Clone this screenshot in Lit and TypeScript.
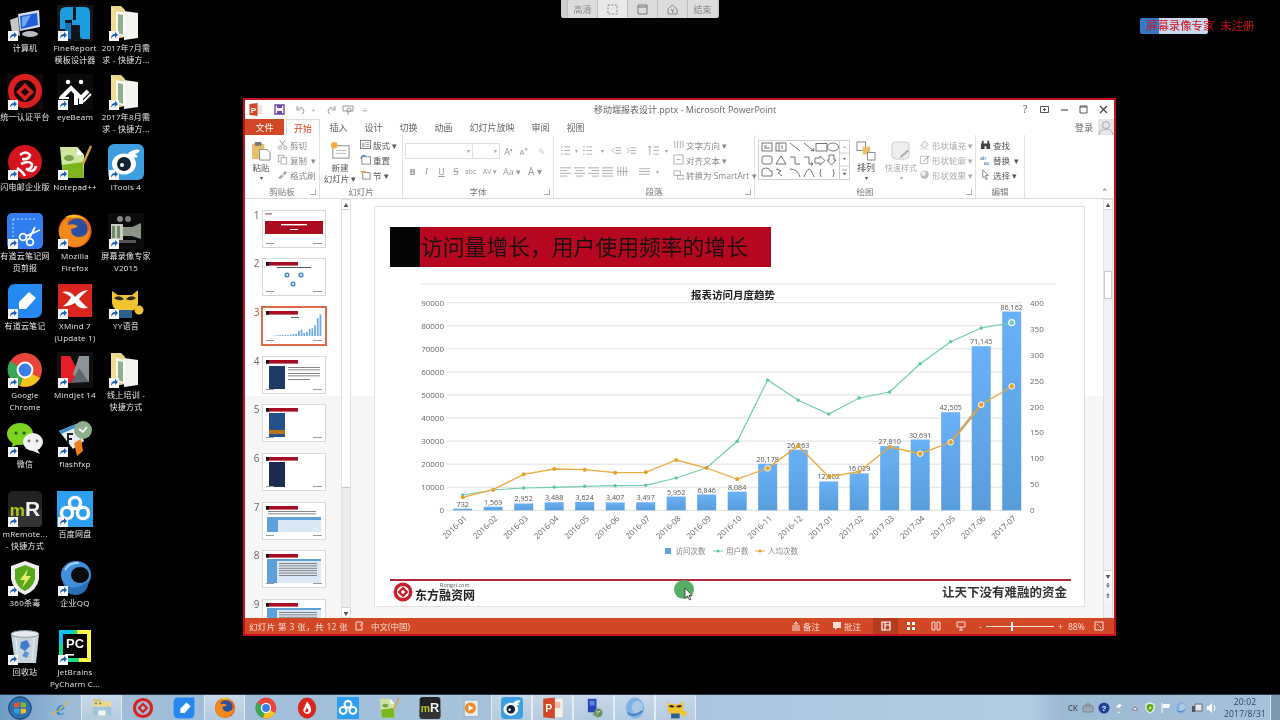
import { LitElement, html, css, svg } from 'lit';
import { customElement } from 'lit/decorators.js';

// desktop and taskbar icons, all on a 36x36 box
const shapes: Record<string, unknown> = {
  computer: svg`<path d="M11 9l21-4 1 17-20 4z" fill="#d5dce6"/><path d="M13 11l17-3 1 12-17 4z" fill="#1c5ed6"/><path d="M15 12l9-2-6 11-3 1z" fill="#6fa4ee"/><path d="M3 15l8-3 2 19-8-3z" fill="#c4c8cd"/><ellipse cx="23" cy="29" rx="8" ry="3" fill="#b9bec4"/>`,
  finereport: svg`<rect width="36" height="36" fill="#10161c"/><path d="M3 8q0-6 6-6h7v13H8v9H3z" fill="#1d9ce0"/><path d="M19 2h9q5 0 5 6v26h-7q-3 0-3-3V20h-8v-5h4z" fill="#1d9ce0"/><path d="M8 18h6v16H8z" fill="#1574b8"/>`,
  folder: svg`<path d="M3 1h10l4 4v27l-14 3z" fill="#e9d58c"/><path d="M16 6l14 2v25l-14 2z" fill="#f4f4f0"/><path d="M8 6l9 2v24l-9-3z" fill="#fff"/><path d="M10 9l5 1v20l-5-2z" fill="#8fae8a"/><path d="M3 1l5 3v30l-5 1z" fill="#f1dc92"/>`,
  diamond: svg`<rect width="36" height="36" fill="#140808"/><circle cx="18" cy="17" r="14" fill="none" stroke="#d9201f" stroke-width="6"/><path d="M18 9l9 9-9 9-9-9zM18 14l-4 4 4 4 4-4z" fill="#d9201f" fill-rule="evenodd"/>`,
  diamond2: svg`<circle cx="18" cy="18" r="14" fill="none" stroke="#d9201f" stroke-width="5"/><path d="M18 9l9 9-9 9-9-9zM18 14l-4 4 4 4 4-4z" fill="#d9201f" fill-rule="evenodd"/>`,
  eyebeam: svg`<rect width="36" height="36" fill="#0a0a0a"/><circle cx="11" cy="8" r="2.2" fill="#fff"/><circle cx="24" cy="8" r="2.2" fill="#fff"/><path d="M4 24L14 14l5 5v12M18 18l6 6 7-7M24 24v6" fill="none" stroke="#fff" stroke-width="4"/><path d="M2 24h10M26 28l8-8" stroke="#fff" stroke-width="2"/>`,
  mail: svg`<circle cx="18" cy="18" r="17" fill="#d3141d"/><path d="M13 11q6-5 10 0-1 5-8 4M14 20q8-4 11 0 0 6-6 5 8 5 10-3M10 24q6 4 8 8" fill="none" stroke="#fff" stroke-width="2.6"/>`,
  notepad: svg`<path d="M3 3h17l7 8v23H6z" fill="#cfe6a0"/><path d="M5 21l21-3 1 16H6z" fill="#7db61c"/><path d="M20 3l7 8h-7z" fill="#fff"/><ellipse cx="12" cy="14" rx="5" ry="3" fill="#78a04a"/><path d="M26 20l8-18" stroke="#d8a33a" stroke-width="2.4"/>`,
  itools: svg`<rect width="36" height="36" rx="6" fill="#3d9ee0"/><ellipse cx="16" cy="20" rx="12" ry="10.5" fill="#fff"/><circle cx="16" cy="20" r="7" fill="#123"/><circle cx="14" cy="21" r="2" fill="#fff"/><path d="M20 9q6-5 12-3-2 4-5 4 2 1 3 3-5 2-8-1z" fill="#fff"/>`,
  scissors: svg`<rect width="36" height="36" rx="5" fill="#2f7df0"/><path d="M6 6h22M6 6v20" stroke="#cfe0ff" stroke-dasharray="2 2" fill="none"/><circle cx="16" cy="24" r="3.4" fill="none" stroke="#fff" stroke-width="1.8"/><circle cx="23" cy="29" r="3.4" fill="none" stroke="#fff" stroke-width="1.8"/><path d="M19 23L33 17M22 26L28 14" stroke="#fff" stroke-width="1.8"/>`,
  firefox: svg`<circle cx="18" cy="18" r="16.5" fill="#e8601c"/><circle cx="20" cy="16" r="10.5" fill="#2a4f9c"/><path d="M2 18q2-12 12-15-5 5-3 9 5-2 10 1-3 3-7 3 0 8 8 8 7 0 11-8-1 16-15 18Q3 33 2 18z" fill="#f08a1d"/><path d="M8 4q12-6 22 4-8-5-13-3z" fill="#f4c020"/>`,
  recorder: svg`<rect width="36" height="36" fill="#0c0c0c"/><rect x="3" y="11" width="12" height="16" fill="#c8ccc4"/><path d="M4 13h3v12H4zM9 13h3v12H9z" fill="#6e8d60"/><path d="M15 14h9l9-4v16l-9-3h-9z" fill="#8c9486"/><circle cx="12" cy="6" r="3" fill="#888"/><circle cx="20" cy="6" r="3" fill="#777"/><path d="M8 27h20v3H8z" fill="#555"/>`,
  youdao: svg`<path d="M8 1h27v26q0 8-8 8H9q-8 0-8-8V9q0-8 7-8z" fill="#2689f2"/><path d="M22 9l7 6-10 11H12v-7z" fill="#fff"/>`,
  xmind: svg`<rect width="34" height="33" x="1" y="1" fill="#d9261c"/><path d="M5 9q8-2 13 5 5-6 13-7-7 6-9 9 4 5 9 9-9 2-13-5-6 4-12 3 6-4 8-9-4-3-9-5z" fill="#fff"/>`,
  yy: svg`<path d="M4 8l6 4h14l6-5v14q-2 8-13 8-12 0-13-9z" fill="#f1c232"/><path d="M6 15q5-4 10 1-5 3-10-1zM18 16q5-5 10-1-5 4-10 1z" fill="#2a2a2a"/><path d="M10 27h14v8H10z" fill="#2f5f8f"/><circle cx="31" cy="27" r="4.5" fill="#f1c232"/>`,
  chrome: svg`<circle cx="18" cy="18" r="17" fill="#e8453a"/><path d="M18 18L33 26A17 17 0 0 1 13 34z" fill="#f6c51c"/><path d="M18 18L13 34A17 17 0 0 1 3 9z" fill="#3aa757"/><circle cx="18" cy="18" r="8.4" fill="#fff"/><circle cx="18" cy="18" r="6.4" fill="#3b7de6"/>`,
  mindjet: svg`<rect width="36" height="36" fill="#101010"/><path d="M4 4h9l8 15-7 12H4z" fill="#e31e26"/><path d="M22 4h10v26H21l-5-8z" fill="#8b9498"/><path d="M14 31l8-15 10 14z" fill="#5e686c"/>`,
  wechat: svg`<ellipse cx="13" cy="13" rx="13" ry="11" fill="#7ed321"/><path d="M6 20l-1 6 7-3z" fill="#7ed321"/><circle cx="9" cy="12" r="1.6" fill="#2b5e10"/><circle cx="17" cy="12" r="1.6" fill="#2b5e10"/><ellipse cx="26" cy="21" rx="10" ry="9" fill="#f2f2f2"/><path d="M30 28l3 5-7-3z" fill="#f2f2f2"/><circle cx="22" cy="20" r="1.4" fill="#777"/><circle cx="30" cy="20" r="1.4" fill="#777"/>`,
  flashfxp: svg`<path d="M2 10l17-7 8 17-11 8z" fill="#e9eef2"/><path d="M2 10l17-7 1 3-16 7z" fill="#3a8fd0"/><circle cx="26" cy="9" r="9" fill="#8fae8e"/><path d="M22 8l4 3 4-5" stroke="#fff" fill="none" stroke-width="1.6"/><path d="M17 22l7-4 2 12-6 5z" fill="#ef7d1a"/><path d="M10 12h6v2h-4v3h3v2h-3v4h-2z" fill="#222"/>`,
  mremote: svg`<rect width="34" height="36" x="1" rx="5" fill="#222"/><rect x="1" y="18" width="34" height="18" rx="4" fill="#333"/><text x="18" y="25" font-size="17" font-weight="700" font-family="Liberation Sans" text-anchor="middle"><tspan fill="#b3c61b">m</tspan><tspan fill="#eee" font-size="21">R</tspan></text>`,
  baidu: svg`<rect width="36" height="36" fill="#2e9ff0"/><g fill="none" stroke="#fff" stroke-width="3.4"><circle cx="18" cy="12" r="5.6"/><circle cx="10" cy="22" r="5.6"/><circle cx="26" cy="22" r="5.6"/></g>`,
  shield: svg`<path d="M18 1l14 5v13q-2 11-14 16Q6 30 4 19V6z" fill="#eee"/><path d="M18 5l10 4v10q-2 8-10 12-8-4-10-12V9z" fill="#58a71c"/><path d="M21 9l-8 11h5l-3 8 9-12h-5z" fill="#e7f06a"/>`,
  qq: svg`<ellipse cx="19" cy="15" rx="15" ry="14" fill="#3f8fdc"/><ellipse cx="23" cy="15" rx="9" ry="8" fill="#0b0b0b"/><path d="M6 22q8 12 26-1-2 14-14 14Q8 35 6 22z" fill="#2b6fb8"/><path d="M8 10q4-8 14-7" stroke="#a8d2f6" stroke-width="2" fill="none"/>`,
  recycle: svg`<path d="M4 5h28l-3 29H8z" fill="#c9d5de"/><ellipse cx="18" cy="5" rx="14" ry="3.4" fill="#e4ebf0" stroke="#8b979f"/><path d="M14 13l6-2 3 6-5 5-5-3z" fill="#3f7bc4"/><path d="M18 22l4 2-2 5-5-2z" fill="#5a92d4"/><path d="M9 9l2 23M27 9l-2 23" stroke="#fff" opacity=".6"/>`,
  pycharm: svg`<rect width="32" height="32" x="2" y="1" fill="#21d789"/><path d="M20 1h14v32H22z" fill="#fcf84a"/><path d="M2 1h14L2 18z" fill="#07c3f2"/><rect x="6" y="5" width="24" height="24" fill="#000"/><text x="18" y="19" font-size="13" font-weight="700" font-family="Liberation Sans" fill="#fff" text-anchor="middle">PC</text><path d="M8 25h9v1.6H8z" fill="#fff"/>`,
  start: svg`<circle cx="18" cy="18" r="17" fill="#2f6fb0"/><circle cx="18" cy="18" r="17" fill="none" stroke="#123a66" stroke-width="1.4"/><path d="M9 11l8-2v8H9z" fill="#e7562b"/><path d="M19 9l8 2v6h-8z" fill="#80b832"/><path d="M9 19h8v8l-8-2z" fill="#2aa5e2"/><path d="M19 19h8v6l-8 2z" fill="#f7bc1e"/>`,
  ie: svg`<text x="17" y="30" font-size="34" font-family="Liberation Serif" font-style="italic" font-weight="700" fill="#2f8bd8" text-anchor="middle">e</text><path d="M3 28q10-2 28-22" stroke="#e8b82a" stroke-width="2" fill="none"/>`,
  explorer: svg`<path d="M3 7h30v23H3z" fill="#ecd98d"/><path d="M3 4h12l2 3H3z" fill="#d9bb62"/><path d="M3 16h30v14H3z" fill="#9ec4de"/><path d="M12 22h12v8H12z" fill="#f2f6f8"/><path d="M6 9h4v3H6zM13 9h4v3h-4z" fill="#6c9e4c"/>`,
  drop: svg`<ellipse cx="18" cy="18" rx="15" ry="17" fill="#d9261c"/><path d="M18 7q9 11 6 17-3 5-8 3-6-3-3-9 3-5 5-11z" fill="#fff"/><path d="M18 18q4 3 2 6-3 2-5 0 0-3 3-6z" fill="#d9261c"/>`,
  media: svg`<rect x="5" y="3" width="26" height="30" rx="2" fill="#9eb8cf"/><rect x="8" y="6" width="21" height="25" fill="#e8eef2"/><circle cx="17" cy="18" r="9" fill="#ec8a24"/><path d="M14 13l8 5-8 5z" fill="#fff"/>`,
  ppt: svg`<rect x="14" y="3" width="20" height="30" fill="#f6f0ec"/><path d="M20 8h10v10H20z" fill="#f0b8a4"/><path d="M2 3l19-2v34L2 33z" fill="#d24726"/><text x="11" y="25" font-size="17" font-weight="700" font-family="Liberation Sans" fill="#fff" text-anchor="middle">P</text>`,
  monitor: svg`<path d="M8 3h14v22H8z" fill="#2346b8"/><path d="M11 6h8v8h-8z" fill="#5f85e0"/><path d="M16 26h8v4h-8z" fill="#8f99a6"/><circle cx="25" cy="26" r="7" fill="#6f8f60"/><path d="M22 28l6-5M22 24h4" stroke="#fff"/>`,
  swirl: svg`<ellipse cx="18" cy="18" rx="15" ry="17" fill="#7fb2e2"/><ellipse cx="22" cy="17" rx="9" ry="11" fill="#a9cbe8"/><path d="M6 26q10 8 24-3" stroke="#3f80c2" stroke-width="3" fill="none"/>`,
};

const icon = (name: string) => html`<svg class="ic" viewBox="0 0 36 36">${shapes[name]}</svg>`;

const DESK = [
  { n: 'computer', c: 0, t: 5, l: ['计算机'] },
  { n: 'finereport', c: 1, t: 5, l: ['FineReport', '模板设计器'] },
  { n: 'folder', c: 2, t: 5, l: ['2017年7月需', '求 - 快捷方...'] },
  { n: 'diamond', c: 0, t: 74, l: ['统一认证平台'] },
  { n: 'eyebeam', c: 1, t: 74, l: ['eyeBeam'] },
  { n: 'folder', c: 2, t: 74, l: ['2017年8月需', '求 - 快捷方...'] },
  { n: 'mail', c: 0, t: 144, l: ['闪电邮企业版'] },
  { n: 'notepad', c: 1, t: 144, l: ['Notepad++'] },
  { n: 'itools', c: 2, t: 144, l: ['iTools 4'] },
  { n: 'scissors', c: 0, t: 213, l: ['有道云笔记网', '页剪报'] },
  { n: 'firefox', c: 1, t: 213, l: ['Mozilla', 'Firefox'] },
  { n: 'recorder', c: 2, t: 213, l: ['屏幕录像专家', 'V2015'] },
  { n: 'youdao', c: 0, t: 283, l: ['有道云笔记'] },
  { n: 'xmind', c: 1, t: 283, l: ['XMind 7', '(Update 1)'] },
  { n: 'yy', c: 2, t: 283, l: ['YY语音'] },
  { n: 'chrome', c: 0, t: 352, l: ['Google', 'Chrome'] },
  { n: 'mindjet', c: 1, t: 352, l: ['Mindjet 14'] },
  { n: 'folder', c: 2, t: 352, l: ['线上培训 -', '快捷方式'] },
  { n: 'wechat', c: 0, t: 421, l: ['微信'] },
  { n: 'flashfxp', c: 1, t: 421, l: ['flashfxp'] },
  { n: 'mremote', c: 0, t: 491, l: ['mRemote...', '- 快捷方式'] },
  { n: 'baidu', c: 1, t: 491, l: ['百度网盘'] },
  { n: 'shield', c: 0, t: 560, l: ['360杀毒'] },
  { n: 'qq', c: 1, t: 560, l: ['企业QQ'] },
  { n: 'recycle', c: 0, t: 629, l: ['回收站'] },
  { n: 'pycharm', c: 1, t: 629, l: ['JetBrains', 'PyCharm C...'] },
];
const COL_X = [0, 50, 101];

const TASKS = [
  { n: 'ie' }, { n: 'explorer', on: true }, { n: 'diamond2' }, { n: 'youdao' }, { n: 'firefox', on: true },
  { n: 'chrome' }, { n: 'drop' }, { n: 'baidu' }, { n: 'notepad' }, { n: 'mremote' }, { n: 'media' },
  { n: 'itools', on: true }, { n: 'ppt', on: true }, { n: 'monitor', on: true }, { n: 'swirl', on: true }, { n: 'yy', on: true },
];

// chart data, read off the picture in page pixels
const MONTHS = ['2016-01', '2016-02', '2016-03', '2016-04', '2016-05', '2016-06', '2016-07', '2016-08', '2016-09', '2016-10', '2016-11', '2016-12', '2017-01', '2017-02', '2017-03', '2017-04', '2017-05', '2017-06', '2017-07'];
const VISITS = [732, 1569, 2952, 3488, 3624, 3407, 3497, 5952, 6846, 8084, 20178, 26263, 12502, 16029, 27810, 30691, 42505, 71145, 86162];
const USERS = [495, 490, 488, 487.3, 486.3, 485.7, 485.3, 478, 467.7, 441.3, 380, 400.3, 414, 398, 392, 363.7, 341.7, 328, 322.7];
const AVG = [497.3, 489.7, 474.3, 469, 469.7, 472.7, 472.3, 460, 468, 479, 468.3, 445.7, 476.7, 471.7, 447, 453.7, 442.3, 404.7, 386.3];
const RINGED = [10, 15, 16, 17, 18];
const Y0 = 510.3;
const PX = 207.6;
const cx = (i: number) => 462.7 + i * 30.5;
const pts = (ys: number[]) => ys.map((y, i) => `${cx(i)},${y}`).join(' ');

const RIGHT_TICKS = [0, 50, 100, 150, 200, 250, 300, 350, 400];

function chart() {
  return html`<svg class="chart" width="709" height="293" viewBox="375 283 709 293">
    <defs>
      <linearGradient id="bar" x1="0" y1="0" x2="0" y2="1"><stop offset="0" stop-color="#69b1f8"/><stop offset="1" stop-color="#589dda"/></linearGradient>
    </defs>
    <line x1="420" x2="1056" y1="284" y2="284" stroke="#e4e4e4" stroke-width="1.2"/>
    <text x="733" y="299" class="ctitle" text-anchor="middle">报表访问月度趋势</text>
    ${Array.from({ length: 10 }, (_, k) => {
      const y = Y0 - (k * PX) / 9;
      return svg`<line x1="447" x2="1022" y1=${y} y2=${y} stroke="#dfdfdf"/>
        <text x="444" y=${y + 3} class="tick" text-anchor="end">${k * 10000}</text>`;
    })}
    ${RIGHT_TICKS.map((v, k) => svg`<text x="1030" y=${Y0 - (k * PX) / 8 + 3} class="tick">${v}</text>`)}
    ${VISITS.map((v, i) => {
      const h = (v / 90000) * PX;
      return svg`<rect x=${cx(i) - 9.5} y=${Y0 - h} width="19" height=${h} fill="url(#bar)"/>
        <text x=${cx(i)} y=${Y0 - h - 2} class="val" text-anchor="middle">${v.toLocaleString('en-US')}</text>`;
    })}
    <polyline points=${pts(USERS)} fill="none" stroke="#72cdb8" stroke-width="1.2"/>
    <line x1=${cx(16)} y1=${AVG[16]} x2=${cx(17)} y2=${AVG[17]} stroke="#a39f8a" stroke-width="2.6"/>
    <polyline points=${pts(AVG)} fill="none" stroke="#eca93c" stroke-width="1.3"/>
    ${USERS.map((y, i) => i === 18
      ? svg`<circle cx=${cx(i)} cy=${y} r="3" fill="#72cdb8" stroke="#fff" stroke-width="1.2"/>`
      : svg`<circle cx=${cx(i)} cy=${y} r="1.7" fill="#5cc4ab"/>`)}
    ${AVG.map((y, i) => RINGED.includes(i)
      ? svg`<circle cx=${cx(i)} cy=${y} r="2.8" fill="#e9a02c" stroke="#fff" stroke-width="1"/>`
      : svg`<circle cx=${cx(i)} cy=${y} r="2" fill="#e9a02c"/>`)}
    ${MONTHS.map((m, i) => svg`<text class="tick" text-anchor="end" transform="translate(${cx(i) + 5} 519) rotate(-43)">${m}</text>`)}
    <rect x="665" y="548" width="6" height="6" fill="#5da5e4"/>
    <text x="675.5" y="554" class="leg">访问次数</text>
    <line x1="713" x2="723" y1="551" y2="551" stroke="#72cdb8"/><circle cx="718" cy="551" r="1.5" fill="#5cc4ab"/>
    <text x="726" y="554" class="leg">用户数</text>
    <line x1="755" x2="765" y1="551" y2="551" stroke="#eca93c"/><circle cx="760" cy="551" r="1.6" fill="#e9a02c"/>
    <text x="768" y="554" class="leg">人均次数</text>
  </svg>`;
}

function thumbBody(i: number) {
  const bar = svg`<rect x="3" y="3" width="32" height="3.6" fill="#a80d22"/><rect x="3" y="3" width="3" height="3.6" fill="#111"/>`;
  const foot = svg`<rect x="3" y="32" width="8" height="1" fill="#999"/><rect x="50" y="32" width="9" height="1" fill="#999"/>`;
  const lines = (x: number, y: number, n: number, w = 30) => Array.from({ length: n }, (_, k) => svg`<rect x=${x} y=${y + k * 2.4} width=${w} height=".9" fill="#777"/>`);
  switch (i) {
    case 1: return svg`<rect x="2" y="2" width="7" height="1.6" fill="#b88"/><rect x="2" y="10" width="58" height="13" fill="#ab0d1e"/><rect x="18" y="13" width="26" height="1.4" fill="#fff"/><rect x="27" y="18" width="8" height="1" fill="#fff"/>${foot}`;
    case 2: return svg`${bar}<rect x="14" y="8" width="34" height="1" fill="#555"/><circle cx="24" cy="16" r="2.6" fill="#4d8cc4"/><circle cx="38" cy="16" r="2.6" fill="#4d8cc4"/><circle cx="30" cy="25" r="2.6" fill="#4d8cc4"/><circle cx="24" cy="16" r="1" fill="#fff"/><circle cx="38" cy="16" r="1" fill="#fff"/><circle cx="30" cy="25" r="1" fill="#fff"/>${foot}`;
    case 3: return svg`${bar}<rect x="28" y="9" width="8" height="1" fill="#666"/>${VISITS.map((v, k) => svg`<rect x=${8 + k * 2.7} y=${28 - v / 4000} width="1.7" height=${v / 4000} fill="#66a9e6"/>`)}${foot}`;
    case 4: return svg`${bar}<rect x="6" y="9" width="16" height="23" fill="#1f3a66"/>${lines(25, 10, 2, 32)}${lines(25, 16, 2, 32)}${lines(25, 22, 1, 22)}${foot}`;
    case 5: return svg`${bar}<rect x="6" y="8" width="16" height="24" fill="#26508a"/><rect x="6" y="25" width="16" height="4" fill="#b8741c"/>${foot}`;
    case 6: return svg`${bar}<rect x="6" y="8" width="16" height="25" fill="#1c2c4e"/>${foot}`;
    case 7: return svg`${bar}${lines(5, 8, 2, 48)}<rect x="4" y="14" width="54" height="15" fill="#dbe8f5"/><rect x="4" y="14" width="54" height="3" fill="#5ea0d8"/><rect x="4" y="14" width="11" height="15" fill="#5ea0d8"/>${foot}`;
    default: return svg`${bar}<rect x="4" y="8" width="54" height="24" fill="#dbe8f5"/><rect x="4" y="8" width="10" height="24" fill="#5ea0d8"/><rect x="4" y="8" width="54" height="2" fill="#5ea0d8"/>${lines(16, 12, 6, 38)}${foot}`;
  }
}

const SM = {
  cut: html`<svg class="si" viewBox="0 0 12 12"><g fill="none" stroke="#999"><circle cx="3" cy="9.5" r="1.6"/><circle cx="9" cy="9.5" r="1.6"/><path d="M4 8l5-7M8 8L3 1"/></g></svg>`,
  copy: html`<svg class="si" viewBox="0 0 12 12"><g fill="#fff" stroke="#aaa"><rect x="1.5" y="1.5" width="6" height="7"/><rect x="4.5" y="4" width="6" height="7"/></g></svg>`,
  brush: html`<svg class="si" viewBox="0 0 12 12"><path d="M1 10l4-4 2 2-3 3zM6 5l3-3 2 2-3 3z" fill="#aaa"/></svg>`,
  layout: html`<svg class="si" viewBox="0 0 12 12"><rect x=".5" y="1.5" width="11" height="9" fill="#fff" stroke="#777"/><path d="M2 4h3v5H2z" fill="#bbb"/><path d="M6 4h4M6 6h4M6 8h4" stroke="#999"/></svg>`,
  reset: html`<svg class="si" viewBox="0 0 12 12"><rect x="2" y="3" width="9.5" height="8" fill="#fff" stroke="#888"/><path d="M1 5q1-4 5-3" stroke="#3a7cc0" fill="none" stroke-width="1.4"/></svg>`,
  sect: html`<svg class="si" viewBox="0 0 12 12"><rect x="3" y="4" width="8" height="7" fill="#fff" stroke="#888"/><path d="M1 2h5v2H1z" fill="#e8a33c"/></svg>`,
  fill: html`<svg class="si" viewBox="0 0 12 12"><path d="M2 7l4-5 4 4-4 4z" fill="#f2f2f2" stroke="#bbb"/><path d="M1 11h10" stroke="#ddd"/></svg>`,
  line: html`<svg class="si" viewBox="0 0 12 12"><path d="M1.5 2.5h8v8h-8z" fill="none" stroke="#bbb"/><path d="M5 8l6-6" stroke="#888"/></svg>`,
  fx: html`<svg class="si" viewBox="0 0 12 12"><circle cx="6" cy="6" r="4.5" fill="#bbb"/><circle cx="5" cy="5" r="2.5" fill="#eee"/></svg>`,
  find: html`<svg class="si" viewBox="0 0 12 12"><path d="M1 5h4v6H1zM7 5h4v6H7zM2 2h2v3H2zM8 2h2v3H8zM5 5h2v3H5z" fill="#444"/></svg>`,
  repl: html`<svg class="si" viewBox="0 0 12 12"><text x="0" y="6" font-size="6" fill="#3a6fb0" font-family="Liberation Sans">ab</text><text x="4" y="11.5" font-size="6" fill="#3a6fb0" font-family="Liberation Sans">ac</text></svg>`,
  sel: html`<svg class="si" viewBox="0 0 12 12"><path d="M3 1l6 6H6l2 4-1.5.6L4.6 8 3 9.6z" fill="#fff" stroke="#666" stroke-width=".8"/></svg>`,
};

const lineIcon = (rows: string) => html`<svg class="pi" viewBox="0 0 12 12"><path d=${rows} stroke="#aaa" fill="none"/></svg>`;

@customElement('app-root')
export class AppRoot extends LitElement {
  static styles = css`
    :host {
      display: block;
      position: relative;
      width: 1280px;
      height: 720px;
      overflow: hidden;
      background: #000;
      font-family: "Open Sans", "Noto Sans CJK SC", sans-serif;
      color: #555;
      filter: blur(0.5px);
    }
    .ic { display: block; width: 100%; height: 100%; }

    /* desktop */
    .tile { position: absolute; width: 50px; display: flex; flex-direction: column; align-items: center; }
    .tile-icon { position: relative; width: 36px; height: 36px; }
    .arrow { position: absolute; left: 1px; bottom: 0; width: 10px; height: 10px; background: #f4f6f8; }
    .arrow svg { display: block; }
    .tile-label { margin-top: 1px; color: #e6e6e6; font-size: 8px; letter-spacing: .22px; line-height: 11.5px; text-align: center; white-space: nowrap; }

    /* recorder overlays */
    .rec-bar { position: absolute; left: 561px; top: 0; width: 158px; height: 18px; display: flex; padding-left: 6px; box-sizing: border-box; background: #cfcfcf; border-radius: 0 0 2px 2px; }
    .rec-btn { width: 30px; display: flex; align-items: center; justify-content: center; background: #dcdcdc; border-left: 1px solid #bdbdbd; box-sizing: border-box; color: #8a8a8a; font-size: 9px; }
    .rec-btn.on { background: #e9e9e9; }
    .rec-btn svg { width: 11px; height: 11px; }
    .reg { position: absolute; left: 1140px; top: 18px; width: 68px; height: 16px; border-radius: 2px; background: linear-gradient(90deg, #3478c8 0 19px, #c9dcf2 19px); }
    .reg-text { position: absolute; left: 1146px; top: 18px; height: 16px; line-height: 16px; color: #d6101c; font-size: 11.4px; white-space: nowrap; }

    /* window */
    .win { position: absolute; left: 243px; top: 98px; width: 873px; height: 538px; box-sizing: border-box; border: 2px solid #c8101c; background: #fff; display: flex; flex-direction: column; }
    .titlebar { height: 19px; display: flex; align-items: center; position: relative; font-size: 9px; color: #666; }
    .qat { display: flex; align-items: center; padding-left: 4px; gap: 5px; }
    .qat svg { width: 13px; height: 13px; display: block; }
    .title { position: absolute; left: 349px; top: 0; line-height: 20px; white-space: nowrap; }
    .win-btns { margin-left: auto; display: flex; padding-right: 1px; }
    .win-btns span { width: 19.5px; text-align: center; color: #555; font-size: 10px; line-height: 19px; display: flex; align-items: center; justify-content: center; }
    .win-btns svg { width: 9px; height: 9px; }
    .tabs { height: 16px; display: flex; align-items: stretch; font-size: 9px; color: #666; border-bottom: 1px solid #dcdcdc; position: relative; box-sizing: content-box; }
    .tab { display: flex; align-items: center; justify-content: center; }
    .tab.file { width: 39px; background: #d24726; color: #fff; }
    .tab.home { width: 34px; margin-left: 2px; color: #d24726; background: #fff; border: 1px solid #dcdcdc; border-bottom: 0; box-sizing: border-box; height: 17px; }
    .tab.plain { padding: 0 8.5px; }
    .tabs-first { margin-left: 1px; }
    .login { margin-left: auto; display: flex; align-items: center; gap: 5px; font-size: 9px; color: #666; }
    .login svg { width: 16px; height: 16px; display: block; }

    /* ribbon */
    .ribbon { height: 63px; display: flex; border-bottom: 1px solid #dcdcdc; font-size: 8.5px; color: #888; flex: none; box-sizing: content-box; margin-top: -1px; position: relative; background: #fff; }
    .group { display: flex; flex-direction: column; border-right: 1px solid #e2e2e2; position: relative; box-sizing: border-box; height: 63px; }
    .gbody { height: 50px; display: flex; }
    .glabel { text-align: center; line-height: 13px; color: #777; }
    .launch { position: absolute; right: 3px; bottom: 3px; width: 5px; height: 5px; border-right: 1px solid #aaa; border-bottom: 1px solid #aaa; }
    .si { width: 11px; height: 11px; display: block; flex: none; }
    .pi { width: 11px; height: 11px; display: block; flex: none; }
    .rows { display: flex; flex-direction: column; padding-top: 2px; }
    .row { height: 15px; display: flex; align-items: center; gap: 2px; white-space: nowrap; }
    .dark { color: #555; }
    .big { display: flex; flex-direction: column; align-items: center; line-height: 11px; white-space: nowrap; }
    .big svg { width: 20px; height: 20px; display: block; margin: 6px 0 1px; flex: none; }
    .g-clip { width: 75px; }
    .g-slide { width: 83px; }
    .g-font { width: 151px; }
    .g-para { width: 201px; }
    .g-draw { width: 221px; }
    .g-edit { width: 49px; }
    .font-rows { display: flex; flex-direction: column; padding: 8px 0 0 2px; gap: 4px; }
    .font-row { display: flex; align-items: center; height: 16px; }
    .combo { height: 16px; border: 1px solid #e0e0e0; box-sizing: border-box; display: flex; align-items: center; justify-content: flex-end; padding-right: 2px; color: #aaa; font-size: 6px; }
    .fbtn { color: #999; text-align: center; font-size: 9px; flex: none; }
    .para { display: flex; padding: 10px 0 0 6px; }
    .para-rows { width: 114px; display: flex; flex-direction: column; gap: 10px; }
    .para-row { display: flex; align-items: center; height: 11px; }
    .para-side { padding-top: 0; margin-top: -8px; }
    .gallery { margin: 5px 0 0 3px; width: 92px; height: 40px; display: block; flex: none; }
    .collapse { position: absolute; right: 5px; bottom: 2px; color: #666; font-size: 9px; line-height: 9px; }

    /* body */
    .main { flex: 1; min-height: 0; display: flex; background: linear-gradient(#fff 0 197px, #f6f6f6 197px); overflow: hidden; }
    .pane { width: 96px; flex: none; padding: 11.5px 0 0 5px; box-sizing: border-box; display: flex; flex-direction: column; gap: 12.7px; overflow: hidden; }
    .thumb { display: flex; height: 36px; flex: none; position: relative; }
    .num { width: 13px; flex: none; font-size: 10px; line-height: 9px; color: #666; text-align: center; }
    .thumb.cur .num { color: #d24726; }
    .shot { width: 62px; height: 36px; display: block; background: #fff; outline: 1px solid #d8d8d8; }
    .thumb.cur .shot { outline: 2px solid #e0694a; outline-offset: 0; }
    .sbar { width: 10px; flex: none; background: #ececec; border: 1px solid #e0e0e0; box-sizing: border-box; display: flex; flex-direction: column; position: relative; }
    .sbtn { height: 10px; flex: none; background: #fff; display: flex; align-items: center; justify-content: center; color: #555; font-size: 5px; border-bottom: 1px solid #d4d4d4; box-sizing: border-box; }
    .sbtn.end { border-top: 1px solid #d4d4d4; border-bottom: 0; }
    .sthumb { background: #fff; border-bottom: 1px solid #c4c4c4; flex: none; box-sizing: border-box; }
    .sfill { flex: 1; }
    .editor { flex: 1; min-width: 0; padding: 8px 0 0 24px; box-sizing: border-box; }
    .slide { width: 709px; height: 399px; box-sizing: border-box; background: #fff; outline: 1px solid #e2e2e2; display: flex; flex-direction: column; }
    .headline { margin: 20px 0 0 15px; width: 381px; height: 40px; flex: none; display: flex; align-items: center; background: #b7061f; color: #1a1012; font-size: 21.8px; line-height: 40px; white-space: nowrap; }
    .headline i { width: 30px; height: 40px; background: #050505; margin-right: 1px; flex: none; }
    .chart { display: block; margin-top: 16px; flex: none; }
    .ctitle { font-size: 10.5px; font-weight: 700; fill: #222; }
    .tick { font-size: 8px; fill: #666; }
    .val { font-size: 7.2px; fill: #555; }
    .leg { font-size: 7.5px; fill: #888; }
    .rule { margin: 3px 13px 0 15px; height: 2px; background: #b42a3c; flex: none; }
    .foot { margin: -2px 17px 0 18px; display: flex; align-items: center; justify-content: space-between; }
    .brand { display: flex; align-items: flex-end; height: 24px; gap: 2px; position: relative; }
    .brand svg { width: 20px; height: 20px; display: block; margin-bottom: 1px; }
    .brand b { font-size: 12px; line-height: 13px; color: #222; margin-bottom: 1px; }
    .brand small { position: absolute; left: 47px; top: 3px; font-size: 5.5px; line-height: 6px; color: #555; }
    .slogan { font-size: 12.5px; font-weight: 700; color: #333; }
    .rbar { width: 10px; flex: none; margin-right: 1px; background: #f1f1f1; border: 1px solid #e0e0e0; box-sizing: border-box; display: flex; flex-direction: column; }
    .mark { height: 10px; display: flex; align-items: center; justify-content: center; font-size: 7px; color: #666; flex: none; line-height: 10px; background: #f6f6f6; }

    /* status bar */
    .status { height: 16px; flex: none; background: #d24726; color: #f8e0d8; font-size: 8.5px; display: flex; align-items: center; white-space: nowrap; position: relative; }
    .status svg { width: 10px; height: 10px; display: block; flex: none; }
    .st-count { margin-left: 4px; letter-spacing: .35px; width: 105px; }
    .st-lang { margin-left: 7px; }
    .st-right { margin-left: auto; display: flex; align-items: center; height: 100%; }
    .st-note { display: flex; align-items: center; gap: 2px; margin-right: 12px; }
    .st-view { width: 25px; height: 100%; display: flex; align-items: center; justify-content: center; }
    .st-view.on { background: #b63c20; }
    .zoomer { margin-left: 6px; width: 84px; display: flex; align-items: center; position: relative; }
    .ztrack { flex: 1; height: 1px; background: #f8e0d8; margin: 0 4px; position: relative; }
    .zknob { position: absolute; left: 25px; top: -4px; width: 2px; height: 9px; background: #fff; }
    .zpct { margin-left: 5px; width: 22px; }
    .zfit { margin: 0 10px 0 4px; }

    /* cursor, over the slide */
    .spot { position: absolute; left: 674px; top: 580px; width: 20px; height: 19px; border-radius: 50%; background: #54ae66; }
    .cursor { position: absolute; left: 684px; top: 587px; width: 9px; height: 14px; }

    /* taskbar */
    .taskbar { position: absolute; left: 0; right: 0; bottom: 0; height: 26px; display: flex; align-items: stretch; background: linear-gradient(90deg, #6d9bc3 0, #9dbcd8 70px, #a9c5dd 50%, #b4cde2 1030px, #9cb9d2 1060px, #a6c2da 100%); border-top: 1px solid #27394a; box-sizing: border-box; }
    .orb { width: 40px; flex: none; display: flex; align-items: center; justify-content: center; }
    .orb span { width: 24px; height: 24px; display: block; }
    .task { width: 41px; flex: none; display: flex; align-items: center; justify-content: center; box-sizing: border-box; }
    .task.on { background: linear-gradient(#c6d8e8, #b4cbe0); border: 1px solid #e2ecf4; border-width: 0 1px; }
    .task span { width: 22px; height: 22px; display: block; }
    .tray { margin-left: auto; display: flex; align-items: center; }
    .ti { width: 15.5px; display: flex; align-items: center; justify-content: center; color: #48586a; font-size: 8px; font-weight: 600; }
    .ti svg { width: 12px; height: 12px; display: block; }
    .ti span { width: 12px; height: 12px; display: block; }
    .clock { width: 50px; text-align: center; color: #33485c; font-size: 8.5px; line-height: 12px; letter-spacing: .2px; }
    .showdesk { width: 10px; align-self: stretch; background: #7f97ac; margin-left: 0; border-left: 1px solid #dbe6ef; box-sizing: border-box; }
  `;

  private ribbon() {
    return html`<div class="ribbon">
      <div class="group g-clip">
        <div class="gbody">
          <div class="big dark" style="width:32px">
            <svg viewBox="0 0 21 21"><path d="M1 3h13v16H1z" fill="#e9bf6a"/><rect x="4" y="1" width="7" height="4" fill="#777"/><path d="M9 9h8l3 3v8H9z" fill="#fff" stroke="#888"/></svg>
            <span>粘贴</span><span style="font-size:6px">▾</span>
          </div>
          <div class="rows">
            <div class="row">${SM.cut}<span>剪切</span></div>
            <div class="row">${SM.copy}<span>复制&nbsp;&nbsp;▾</span></div>
            <div class="row">${SM.brush}<span>格式刷</span></div>
          </div>
        </div>
        <div class="glabel">剪贴板</div><i class="launch"></i>
      </div>
      <div class="group g-slide">
        <div class="gbody">
          <div class="big dark" style="width:40px">
            <svg viewBox="0 0 21 21"><rect x="3" y="5" width="17" height="13" fill="#fff" stroke="#888"/><path d="M6 10h11M6 13h11" stroke="#bbb"/><circle cx="4.5" cy="4.5" r="3.5" fill="#f0b23c"/></svg>
            <span>新建</span><span>幻灯片 ▾</span>
          </div>
          <div class="rows dark">
            <div class="row">${SM.layout}<span>版式 ▾</span></div>
            <div class="row">${SM.reset}<span>重置</span></div>
            <div class="row">${SM.sect}<span>节 ▾</span></div>
          </div>
        </div>
        <div class="glabel">幻灯片</div>
      </div>
      <div class="group g-font">
        <div class="gbody font-rows">
          <div class="font-row">
            <div class="combo" style="width:68px">▾</div><div class="combo" style="width:28px;margin-left:-1px">▾</div>
            <span class="fbtn" style="width:15px;margin-left:1px">A<sup style="font-size:5px">▴</sup></span>
            <span class="fbtn" style="width:15px;font-size:8px">A<sup style="font-size:5px">▾</sup></span>
            <span class="fbtn" style="width:22px;color:#ccc">✎</span>
          </div>
          <div class="font-row" style="margin-left:1px">
            <b class="fbtn" style="width:13px">B</b><i class="fbtn" style="width:15px;font-family:'Liberation Serif'">I</i>
            <u class="fbtn" style="width:15px">U</u><s class="fbtn" style="width:14px">S</s>
            <span class="fbtn" style="width:15px;font-size:7px">abc</span><span class="fbtn" style="width:24px;font-size:7px">AV ▾</span>
            <span class="fbtn" style="width:20px">Aa ▾</span><span class="fbtn" style="width:26px;font-size:10px">A ▾</span>
          </div>
        </div>
        <div class="glabel">字体</div><i class="launch"></i>
      </div>
      <div class="group g-para">
        <div class="gbody para">
          <div class="para-rows">
            <div class="para-row">
              ${lineIcon('M1 2h2M5 2h6M1 6h2M5 6h6M1 10h2M5 10h6')}<span style="width:11px;text-align:center;font-size:6px;color:#aaa">▾</span>
              ${lineIcon('M1 2h2M5 2h6M1 6h2M5 6h6M1 10h2M5 10h6')}<span style="width:18px;font-size:6px;color:#aaa;text-align:center">▾</span>
              ${lineIcon('M1 6l3-3M1 6l3 3M5 3h6M5 6h6M5 9h6')}<span style="width:4px"></span>
              ${lineIcon('M4 6L1 3M4 6L1 9M5 3h6M5 6h6M5 9h6')}<span style="width:11px"></span>
              ${lineIcon('M2 1v10M0 3l2-2 2 2M6 2h6M6 6h6M6 10h6')}<span style="width:14px;font-size:6px;color:#aaa;text-align:center">▾</span>
            </div>
            <div class="para-row">
              ${lineIcon('M0 2h12M0 5h8M0 8h12M0 11h8')}<span style="width:3px"></span>
              ${lineIcon('M0 2h12M2 5h8M0 8h12M2 11h8')}<span style="width:3px"></span>
              ${lineIcon('M0 2h12M4 5h8M0 8h12M4 11h8')}<span style="width:3px"></span>
              ${lineIcon('M0 2h12M0 5h12M0 8h12M0 11h12')}<span style="width:4px"></span>
              ${lineIcon('M1 1v10M4 1v10M7 1v10M10 1v10M0 6h12')}<span style="width:11px"></span>
              ${lineIcon('M0 3h12M0 6h12M0 9h12')}<span style="width:14px;font-size:6px;color:#aaa;text-align:center">▾</span>
            </div>
          </div>
          <div class="rows para-side">
            <div class="row">${lineIcon('M2 2v8M5 2v8M8 2v8M11 2v8')}<span>文字方向 ▾</span></div>
            <div class="row">${lineIcon('M1 1h10v10H1zM4 6h4')}<span>对齐文本 ▾</span></div>
            <div class="row">${lineIcon('M1 2h7v5H1zM5 7h7v4H5z')}<span>转换为 SmartArt ▾</span></div>
          </div>
        </div>
        <div class="glabel">段落</div><i class="launch"></i>
      </div>
      <div class="group g-draw">
        <div class="gbody">
          <svg class="gallery" viewBox="0 0 92 40">
            <rect x=".5" y=".5" width="91" height="39" fill="#fff" stroke="#d0d0d0"/>
            <path d="M81.5 .5v39M81.5 13h10M81.5 26h10" stroke="#d0d0d0"/>
            <g fill="none" stroke="#666" stroke-width=".9">
              <rect x="4" y="3" width="10" height="8"/><path d="M6 6h3M6 8h6"/>
              <rect x="18" y="3" width="10" height="8"/><path d="M21 3v8M24 5v4"/>
              <path d="M32 3l10 8M46 3l10 8M56 11l-3-.5M56 11l-.5-3"/>
              <rect x="58" y="3.5" width="11" height="7.5"/><ellipse cx="75" cy="7" rx="5.5" ry="4"/>
              <rect x="4" y="16" width="10" height="8" rx="2"/><path d="M18 24l5-8 5 8z"/>
              <path d="M32 17h5v7h5M46 17h5v7h4M55 24l-2-1.5M55 24l-2 1.5"/>
              <path d="M60 18h5v-2l5 4.5-5 4.5v-2h-5z" transform="translate(-3 0)"/>
              <path d="M72 16h5v5h2l-4.5 5-4.5-5h2z" transform="translate(-1 -1)"/>
              <path d="M4 36v-5q0-3 4-3 4 0 4 3h2v5z"/><path d="M18 29l5 2-3 2 4 3"/>
              <path d="M32 29q8 0 10 8M46 37q3-8 5-8t5 8"/>
              <path d="M63 29q-2 4 0 8M75 29q2 4 0 8"/>
            </g>
            <g fill="#666"><path d="M85 8l1.5-2 1.5 2z" fill="#aaa"/><path d="M85 18l1.5 2 1.5-2z"/><path d="M84 30h5M85 33l1.5 2 1.5-2z" stroke="#666" stroke-width=".6"/></g>
          </svg>
          <div class="big dark" style="width:36px;margin-left:-2px">
            <svg viewBox="0 0 21 21"><rect x="1" y="1" width="9" height="9" fill="#fff" stroke="#888"/><rect x="7" y="6" width="8" height="8" fill="#e9bf6a"/><rect x="12" y="12" width="8" height="8" fill="#fff" stroke="#888"/></svg>
            <span style="font-size:9px">排列</span><span style="font-size:6px">▾</span>
          </div>
          <div class="big" style="width:36px;margin-left:-1px;font-size:8px;color:#aaa">
            <svg viewBox="0 0 21 21"><rect x="1" y="1" width="18" height="18" rx="4" fill="#eee" stroke="#ccc"/><path d="M10 17l8-7" stroke="#aaa" stroke-width="2"/></svg>
            <span>快速样式</span><span style="font-size:6px">▾</span>
          </div>
          <div class="rows" style="color:#aaa">
            <div class="row">${SM.fill}<span>形状填充 ▾</span></div>
            <div class="row">${SM.line}<span>形状轮廓 ▾</span></div>
            <div class="row">${SM.fx}<span>形状效果 ▾</span></div>
          </div>
        </div>
        <div class="glabel">绘图</div><i class="launch"></i>
      </div>
      <div class="group g-edit">
        <div class="gbody rows dark" style="padding-left:4px">
          <div class="row">${SM.find}<span>查找</span></div>
          <div class="row">${SM.repl}<span>替换 &nbsp;▾</span></div>
          <div class="row">${SM.sel}<span>选择 ▾</span></div>
        </div>
        <div class="glabel">编辑</div>
      </div>
      <span class="collapse">⌃</span>
    </div>`;
  }

  private mainArea() {
    return html`<div class="main">
      <div class="pane">
        ${[1, 2, 3, 4, 5, 6, 7, 8, 9].map((i) => html`<div class="thumb ${i === 3 ? 'cur' : ''}">
          <span class="num">${i}</span>
          <svg class="shot" viewBox="0 0 62 36">${thumbBody(i)}</svg>
        </div>`)}
      </div>
      <div class="sbar">
        <div class="sbtn">▲</div>
        <div class="sthumb" style="height:278px"></div>
        <div class="sfill"></div>
        <div class="sbtn end">▼</div>
      </div>
      <div class="editor">
        <div class="slide">
          <div class="headline"><i></i>访问量增长，用户使用频率的增长</div>
          ${chart()}
          <div class="rule"></div>
          <div class="foot">
            <div class="brand">
              <svg viewBox="0 0 36 36"><circle cx="18" cy="18" r="14" fill="none" stroke="#c8202c" stroke-width="6"/><path d="M18 8l10 10-10 10L8 18zM18 14l-4 4 4 4 4-4z" fill="#c8202c" fill-rule="evenodd"/></svg>
              <b>东方融资网</b><small>Rongzi.com</small>
            </div>
            <span class="slogan">让天下没有难融的资金</span>
          </div>
        </div>
      </div>
      <div class="rbar">
        <div class="sbtn">▲</div>
        <div class="sfill" style="flex:none;height:61px"></div>
        <div class="sthumb" style="height:28px;border:1px solid #c8c8c8"></div>
        <div class="sfill"></div>
        <div class="sbtn end">▼</div>
        <div class="mark" style="margin-top:1px">⇞</div>
        <div class="mark" style="margin-bottom:16px">⇟</div>
      </div>
    </div>`;
  }

  private statusBar() {
    return html`<div class="status">
      <span class="st-count">幻灯片 第 3 张，共 12 张</span>
      <svg viewBox="0 0 10 10"><path d="M2 1h6v8H2zM6 5l3-3" fill="none" stroke="#f8e0d8"/></svg>
      <span class="st-lang">中文(中国)</span>
      <div class="st-right">
        <span class="st-note"><svg viewBox="0 0 10 10"><path d="M5 1L3 3h4zM1 5h8M1 7h8M1 9h8" stroke="#f8e0d8" fill="none"/></svg>备注</span>
        <span class="st-note"><svg viewBox="0 0 10 10"><path d="M1 1h8v6H5L3 9V7H1z" fill="#f8e0d8"/></svg>批注</span>
        <span class="st-view on"><svg viewBox="0 0 10 10"><path d="M1 1h8v8H1zM4 1v8M4 4h5" stroke="#fff" fill="none" stroke-width="1.2"/></svg></span>
        <span class="st-view"><svg viewBox="0 0 10 10"><path d="M1 1h3v3H1zM6 1h3v3H6zM1 6h3v3H1zM6 6h3v3H6z" fill="#fff"/></svg></span>
        <span class="st-view"><svg viewBox="0 0 10 10"><path d="M1 1h3v8H1zM6 1h3v8H6z" fill="none" stroke="#f8e0d8"/></svg></span>
        <span class="st-view"><svg viewBox="0 0 10 10"><path d="M1 1h8v5H1zM5 6v3M3 9h4" fill="none" stroke="#f8e0d8"/></svg></span>
        <div class="zoomer">
          <span>-</span><div class="ztrack"><i class="zknob"></i></div><span>+</span>
        </div>
        <span class="zpct">88%</span>
        <svg class="zfit" viewBox="0 0 10 10"><path d="M1 1h8v8H1zM3 3l1.5 1.5M7 7L5.5 5.5" fill="none" stroke="#f8e0d8"/></svg>
      </div>
    </div>`;
  }

  render() {
    return html`
      ${DESK.map((d) => html`<div class="tile" style="left:${COL_X[d.c]}px;top:${d.t}px">
        <div class="tile-icon">
          ${icon(d.n)}
          <span class="arrow"><svg viewBox="0 0 10 10" width="10" height="10"><path d="M2 8q0-5 4-5V1l3 3-3 3V5q-3 0-4 3z" fill="#1d5fb4"/></svg></span>
        </div>
        <div class="tile-label">${d.l.map((t) => html`<div>${t}</div>`)}</div>
      </div>`)}

      <div class="rec-bar">
        <div class="rec-btn">高清</div>
        <div class="rec-btn on"><svg viewBox="0 0 11 11"><rect x="1" y="1" width="9" height="9" fill="none" stroke="#888" stroke-dasharray="2 1.5"/></svg></div>
        <div class="rec-btn"><svg viewBox="0 0 11 11"><path d="M1 1h9v9H1zM1 3h9" fill="none" stroke="#777"/></svg></div>
        <div class="rec-btn"><svg viewBox="0 0 11 11"><path d="M1 5l4.5-4L10 5v5H1z" fill="none" stroke="#888"/><path d="M4 5l1.5 2L7 5M5.5 7v2" stroke="#888" fill="none"/></svg></div>
        <div class="rec-btn">结束</div>
      </div>
      <div class="reg"></div>
      <div class="reg-text">屏幕录像专家&nbsp;&nbsp;未注册</div>

      <div class="win">
        <div class="titlebar">
          <div class="qat">
            <svg viewBox="0 0 13 13" style="width:14px;height:13px"><rect x="5" y="2" width="8" height="9" fill="#f6e6de"/><path d="M0 1l8-1v13l-8-1z" fill="#d24726"/><text x="4" y="9.5" font-size="8" font-weight="700" fill="#fff" text-anchor="middle" font-family="Liberation Sans">P</text></svg>
            <svg viewBox="0 0 13 13" style="margin-left:5px"><path d="M2 2h9v9H2z" fill="none" stroke="#6a4a9c" stroke-width="1.4"/><path d="M4 2h5v3H4zM4 8h5v3H4z" fill="#6a4a9c"/></svg>
            <svg viewBox="0 0 13 13" style="margin-left:3px"><path d="M3 3v4h4M3 7q3-4 6-1 2 3-1 5" fill="none" stroke="#aaa" stroke-width="1.2"/></svg>
            <span style="width:5px;font-size:5px;color:#aaa">▾</span>
            <svg viewBox="0 0 13 13" style="margin-left:3px"><path d="M10 3v4H6M10 7Q7 3 4 6q-2 3 1 5" fill="none" stroke="#aaa" stroke-width="1.2"/></svg>
            <svg viewBox="0 0 13 13" style="margin-left:-1px"><path d="M1 3h10v5H1zM6 8v4" fill="none" stroke="#999"/><circle cx="7" cy="7" r="2" fill="none" stroke="#999"/></svg>
            <span style="font-size:6px;color:#888;margin-left:2px">≡</span>
          </div>
          <div class="title">移动端报表设计.pptx - Microsoft PowerPoint</div>
          <div class="win-btns">
            <span>?</span>
            <span><svg viewBox="0 0 9 9"><path d="M.5 1.5h8v6h-8zM4.5 3v3M3 4.5h3" fill="none" stroke="#555"/></svg></span>
            <span><svg viewBox="0 0 9 9"><path d="M1 5h7" stroke="#555" stroke-width="1.2"/></svg></span>
            <span><svg viewBox="0 0 9 9"><path d="M1 1h7v7H1zM1 2h7" fill="none" stroke="#555"/></svg></span>
            <span><svg viewBox="0 0 9 9"><path d="M1 1l7 7M8 1L1 8" stroke="#444" stroke-width="1.3"/></svg></span>
          </div>
        </div>
        <div class="tabs">
          <div class="tab file">文件</div>
          <div class="tab home">开始</div>
          <div class="tab plain tabs-first">插入</div>
          <div class="tab plain">设计</div>
          <div class="tab plain">切换</div>
          <div class="tab plain">动画</div>
          <div class="tab plain">幻灯片放映</div>
          <div class="tab plain">审阅</div>
          <div class="tab plain">视图</div>
          <div class="login">登录<svg viewBox="0 0 16 16"><rect width="16" height="16" fill="#e6e6e6"/><circle cx="8" cy="6" r="3.5" fill="none" stroke="#aaa"/><path d="M1 16q1-6 7-6t7 6" fill="none" stroke="#aaa"/></svg></div>
        </div>
        ${this.ribbon()}
        ${this.mainArea()}
        ${this.statusBar()}
      </div>

      <div class="spot"></div>
      <svg class="cursor" viewBox="0 0 9 14"><path d="M1 1v10l2.5-2 2 4 1.5-.8-2-3.7h3z" fill="#fff" stroke="#333" stroke-width=".8"/></svg>

      <div class="taskbar">
        <div class="orb"><span>${icon('start')}</span></div>
        ${TASKS.map((t) => html`<div class="task ${t.on ? 'on' : ''}"><span>${icon(t.n)}</span></div>`)}
        <div class="tray">
          <div class="ti">CK</div>
          <div class="ti"><svg viewBox="0 0 12 12"><path d="M1 4h10v6H1zM4 4V2h4v2" fill="#9aa8b4" stroke="#7a8894"/></svg></div>
          <div class="ti"><svg viewBox="0 0 12 12"><circle cx="6" cy="6" r="5.5" fill="#1f3f9c"/><text x="6" y="9" font-size="8" fill="#fff" font-weight="700" text-anchor="middle" font-family="Liberation Sans">?</text></svg></div>
          <div class="ti"><svg viewBox="0 0 12 12"><path d="M3 5l3-3 3 1-3 3zM6 9l1 2-2 0z" fill="#fff"/></svg></div>
          <div class="ti"><svg viewBox="0 0 12 12"><path d="M3 8l3-3 3 3z" fill="#fff" stroke="#778"/></svg></div>
          <div class="ti"><span>${icon('shield')}</span></div>
          <div class="ti"><svg viewBox="0 0 12 12"><path d="M2 1v10" stroke="#fff"/><path d="M3 2h7l-1 4H3z" fill="#fff"/></svg></div>
          <div class="ti"><span>${icon('swirl')}</span></div>
          <div class="ti"><svg viewBox="0 0 12 12"><path d="M4 2h7v7H4z" fill="#e6eef4" stroke="#667"/><path d="M1 4h3v6H1z" fill="#556"/></svg></div>
          <div class="ti"><svg viewBox="0 0 12 12"><path d="M1 4h2l3-3v10L3 8H1z" fill="#fff"/><path d="M8 3q2 3 0 6" stroke="#fff" fill="none"/></svg></div>
          <div class="clock"><div>20:02</div><div>2017/8/31</div></div>
          <div class="showdesk"></div>
        </div>
      </div>
    `;
  }
}
